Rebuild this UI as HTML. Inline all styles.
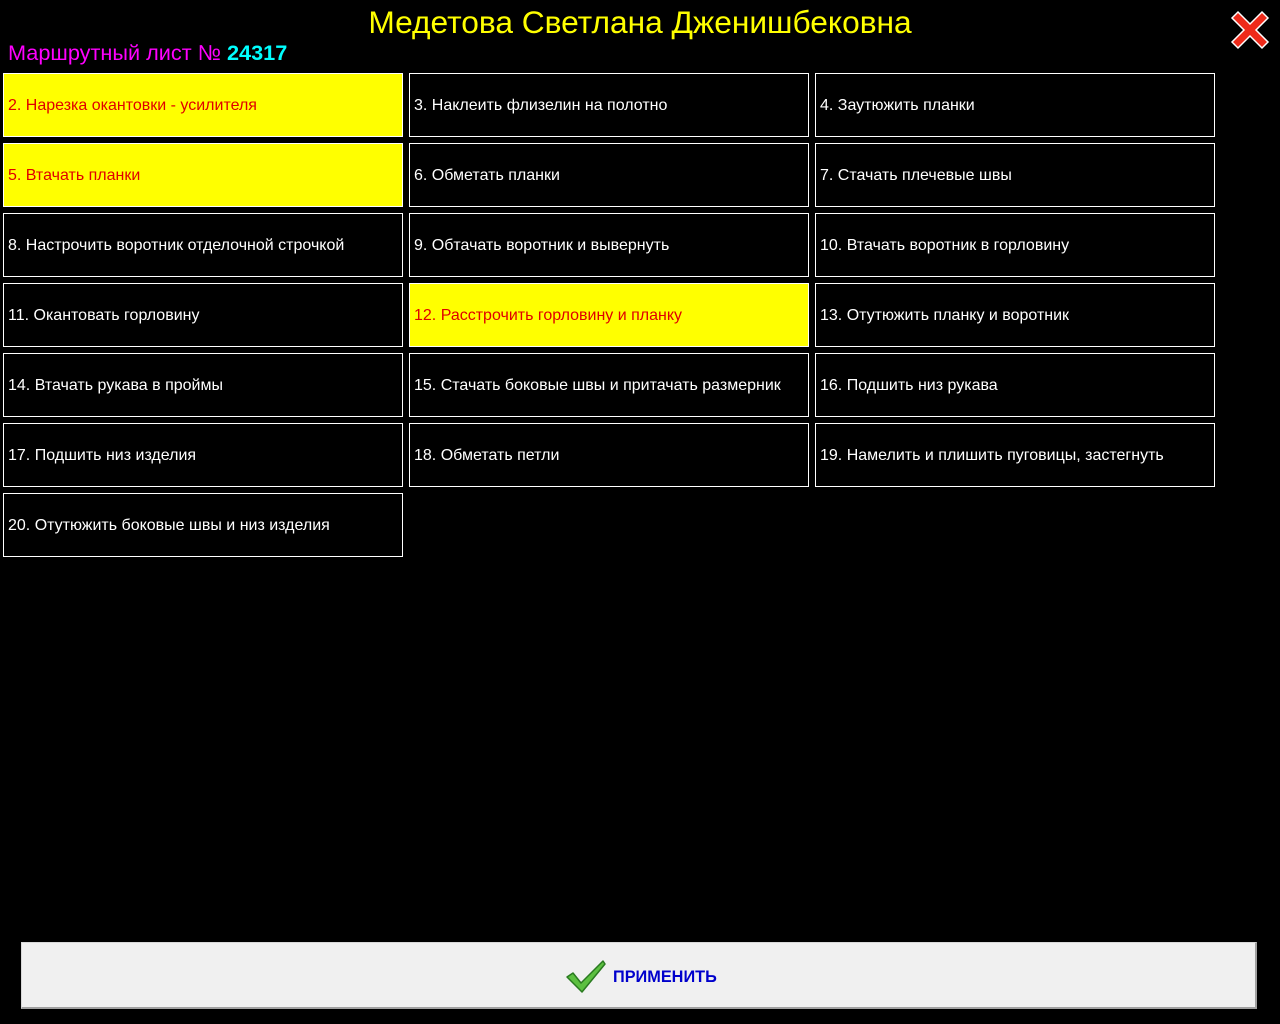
<!DOCTYPE html>
<html><head><meta charset="utf-8"><style>
body{margin:0;width:1280px;height:1024px;background:#000;position:relative;overflow:hidden;font-family:"Liberation Sans","DejaVu Sans",sans-serif}
.t{position:absolute;left:0;width:1280px;top:2px;text-align:center;color:#ffff00;font-size:31.7px;line-height:40px}
.s{position:absolute;left:8px;top:40px;color:#ff00ff;font-size:21.7px;line-height:26px}
.s b{color:#00ffff}
.c{position:absolute;width:400px;height:64px;border:1px solid #fff;color:#fff;font-size:16px;line-height:63px;padding-left:4px;box-sizing:border-box;white-space:nowrap}
.y{background:#ffff00;color:#e00000}
.btn{position:absolute;left:21px;top:942px;width:1233px;height:64px;background:#f0f0f0;border:1px solid #d8d8d8;border-bottom:2px solid #a0a0a0;border-right:2px solid #a0a0a0}
.btn span{position:absolute;left:591px;top:25px;color:#0000cc;font-weight:bold;font-size:16.3px}
</style></head><body>
<div class="t">Медетова Светлана Дженишбековна</div>
<div class="s">Маршрутный лист № <b>24317</b></div>
<svg style="position:absolute;left:1228px;top:10px" width="44" height="42" viewBox="0 0 44 42"><path d="M4 8 L10 2 L22 14 L34 2 L40 8 L28 20 L40 32 L34 38 L22 26 L10 38 L4 32 L16 20 Z" fill="#ee2a1a" stroke="#fff" stroke-width="1.5"/></svg>
<div class="c y" style="left:3px;top:73px">2. Нарезка окантовки - усилителя</div>
<div class="c" style="left:409px;top:73px">3. Наклеить флизелин на полотно</div>
<div class="c" style="left:815px;top:73px">4. Заутюжить планки</div>
<div class="c y" style="left:3px;top:143px">5. Втачать планки</div>
<div class="c" style="left:409px;top:143px">6. Обметать планки</div>
<div class="c" style="left:815px;top:143px">7. Стачать плечевые швы</div>
<div class="c" style="left:3px;top:213px">8. Настрочить воротник отделочной строчкой</div>
<div class="c" style="left:409px;top:213px">9. Обтачать воротник и вывернуть</div>
<div class="c" style="left:815px;top:213px">10. Втачать воротник в горловину</div>
<div class="c" style="left:3px;top:283px">11. Окантовать горловину</div>
<div class="c y" style="left:409px;top:283px">12. Расстрочить горловину и планку</div>
<div class="c" style="left:815px;top:283px">13. Отутюжить планку и воротник</div>
<div class="c" style="left:3px;top:353px">14. Втачать рукава в проймы</div>
<div class="c" style="left:409px;top:353px">15. Стачать боковые швы и притачать размерник</div>
<div class="c" style="left:815px;top:353px">16. Подшить низ рукава</div>
<div class="c" style="left:3px;top:423px">17. Подшить низ изделия</div>
<div class="c" style="left:409px;top:423px">18. Обметать петли</div>
<div class="c" style="left:815px;top:423px">19. Намелить и плишить пуговицы, застегнуть</div>
<div class="c" style="left:3px;top:493px">20. Отутюжить боковые швы и низ изделия</div>
<div class="btn"><svg style="position:absolute;left:543px;top:16px" width="42" height="36" viewBox="0 0 42 36"><path d="M2 18 L8 14 L16 24 L38 2 L40 5 L17 33 Z" fill="#5cc040" stroke="#2a7a20" stroke-width="1.5" stroke-linejoin="round"/></svg><span>ПРИМЕНИТЬ</span></div>
</body></html>
